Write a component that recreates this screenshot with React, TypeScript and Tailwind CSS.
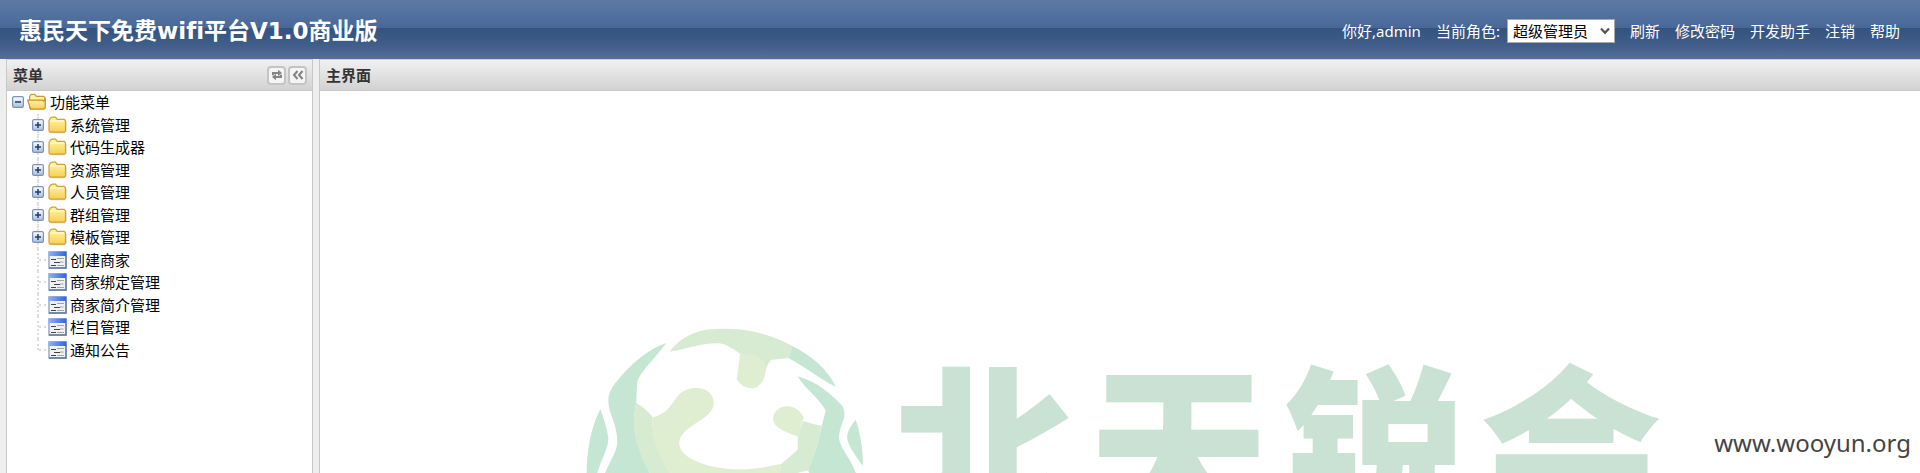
import React from "react";

const folders = ["系统管理", "代码生成器", "资源管理", "人员管理", "群组管理", "模板管理"];
const pages = ["创建商家", "商家绑定管理", "商家简介管理", "栏目管理", "通知公告"];
const links = ["刷新", "修改密码", "开发助手", "注销", "帮助"];

function Gradients() {
  return (
    <svg className="absolute size-0" aria-hidden="true">
      <defs>
        <linearGradient id="folderFill" x1="0" y1="0" x2="0" y2="1">
          <stop offset="0" stopColor="#fff7a8" />
          <stop offset="1" stopColor="#f7cf52" />
        </linearGradient>
        <linearGradient id="toggleFill" x1="0" y1="0" x2="0" y2="1">
          <stop offset="0" stopColor="#ffffff" />
          <stop offset="1" stopColor="#a9bddb" />
        </linearGradient>
        <linearGradient id="pageBar" x1="0" y1="0" x2="1" y2="0">
          <stop offset="0" stopColor="#8db4f5" />
          <stop offset="1" stopColor="#2f62e0" />
        </linearGradient>
      </defs>
    </svg>
  );
}

function FolderIcon() {
  return (
    <svg className="h-[18px] w-[19px] shrink-0" viewBox="0 0 19 18" aria-hidden="true">
      <path d="M2.5 16.8h14.5l1-1V6" fill="none" stroke="#d9d2c0" strokeWidth="1" />
      <path d="M1 4.5 2.5 2l2-.8h3L9.2 3.4h7l1.3 1.4v10l-1.2 1.3H2L1 15z" fill="url(#folderFill)" stroke="#d29e35" strokeWidth="1.2" />
      <path d="M2.3 6.2 3.5 5h12.7" fill="none" stroke="#fffde0" strokeWidth="1" />
    </svg>
  );
}

function OpenFolderIcon() {
  return (
    <svg className="h-[18px] w-[20px] shrink-0" viewBox="0 0 20 18" aria-hidden="true">
      <path d="M2.6 15V3.4l1.6-2h3.6l1.6 2h7.2l1.2 1.2V15z" fill="#fff3a6" stroke="#cf9b38" strokeWidth="1.2" />
      <path d="M.7 7.2h14.7l1 1L18.2 6v8.6l-1.3 1.6H3.6z" fill="url(#folderFill)" stroke="#c58f2e" strokeWidth="1.2" />
    </svg>
  );
}

function PageIcon() {
  return (
    <svg className="h-[18px] w-[19px] shrink-0" viewBox="0 0 19 18" aria-hidden="true">
      <path d="M1 1h17v16H1z" fill="#eef1f5" stroke="#94a4bd" strokeWidth="1.4" />
      <path d="M1 17h17V5" fill="none" stroke="#65799c" strokeWidth="1.4" />
      <path d="M.5.5h18v4.5H.5z" fill="url(#pageBar)" />
      <path d="M9 7.5h7M12 11h3.5M9 14.5h7" stroke="#a3a3a3" strokeWidth="1" />
      <path d="M3 8.5h5M6 11.5h6M3 14.5h5" stroke="#444444" strokeWidth="1.2" />
    </svg>
  );
}

function ToggleIcon({ open }: { open?: boolean }) {
  return (
    <svg className="size-3" viewBox="0 0 12 12" aria-hidden="true">
      <rect x=".6" y=".6" width="10.8" height="10.8" rx="1.5" fill="url(#toggleFill)" stroke="#7c93b8" strokeWidth="1.2" />
      <path d={open ? "M3 6h6" : "M3 6h6M6 3v6"} stroke="#1f3c6b" strokeWidth="1.5" />
    </svg>
  );
}

function Globe() {
  return (
    <svg className="h-[147px] w-[278px] shrink-0" viewBox="50 50 835 441" aria-hidden="true">
      <path fill="#d6ebd1" d="M301 124C325 90 365 66 410 58C500 48 590 62 670 107L658 143L605 149Q597 158 592 172L565 145L512 129Q475 102 455 99C400 96 350 117 301 124Z" />
      <path fill="#c6e6d4" d="M670 107C725 135 775 175 801 230C750 205 710 170 658 143Z" />
      <path fill="#dfedd1" d="M513 129L560 134Q586 146 592 172C588 210 570 234 545 234Q517 232 503 207Z" />
      <path fill="#c6e6d4" d="M291 98C262 140 205 190 203 222L201 278C188 330 190 390 243 491H106C125 445 143 425 144 395C144 340 117 310 117 272C117 245 130 228 145 210C190 155 240 115 291 98Z" />
      <path fill="#c6e6d4" d="M93 296Q112 345 117 385C118 410 97 445 83 491H52C52 420 65 350 93 296Z" />
      <path fill="#d6ebd1" d="M201 278Q228 293 250 321C246 380 270 445 306 491H243C195 405 184 345 201 278Z" />
      <path fill="#dfedd1" d="M250 321C305 308 309 269 334 248C370 222 434 229 434 280C431 330 330 345 330 400C333 450 430 478 512 478C565 477 605 467 636 461L632 491H306C268 443 248 400 250 321Z" />
      <path fill="#dfedd1" d="M612 325C613 282 680 270 704 322L700 333L687 379C650 365 611 350 612 325Z" />
      <path fill="#d6ebd1" d="M702 332Q730 341 758 347C748 392 735 438 717 480L690 487L682 491H632L636 461Q660 443 686 418V379Z" />
      <path fill="#c6e6d4" d="M686 198C745 215 785 250 819 286C840 320 808 345 810 386C815 415 845 445 862 491H722L717 480C742 420 750 382 758 347L770 301C750 262 710 240 686 198Z" />
      <path fill="#c6e6d4" d="M860 328C875 370 882 420 882 467C868 448 834 405 834 378Q836 357 860 328Z" />
    </svg>
  );
}

const panelBar =
  "flex h-8 shrink-0 items-center border-y border-t-[#cfcfcf] border-b-[#c8c8c8] bg-linear-to-b from-[#f1f1f1] to-[#d2d2d2] pr-[5px] pl-[6px] text-[15px] font-bold text-[#333333]";
const toolButton =
  "flex size-[19px] items-center justify-center rounded-[4px] border-2 border-[#c4c4c4] bg-[#f5f5f5] text-[#858585]";

export default function App() {
  return (
    <div className="relative flex h-screen flex-col overflow-hidden bg-[#eeeeee] font-['Noto_Sans','Noto_Sans_CJK_SC',sans-serif] text-[15px] leading-5 text-black">
      <Gradients />
      <header className="flex h-[59px] shrink-0 items-center justify-between bg-[linear-gradient(to_bottom,#5d7aa6_0%,#486898_47%,#35537f_48%,#3f5d89_75%,#546f9b_100%)] pr-5 pl-[19px] text-white">
        <h1 className="pt-[2px] font-['DejaVu_Sans','Noto_Sans_CJK_SC',sans-serif] text-[23px] leading-7 font-bold whitespace-nowrap [font-variant-ligatures:none]">惠民天下免费wifi平台V1.0商业版</h1>
        <nav className="flex items-center gap-[15px] pt-[2px] whitespace-nowrap">
          <span>你好,admin</span>
          <div className="flex items-center gap-[7px]">
            <label htmlFor="role">当前角色:</label>
            <div className="relative flex">
              <select id="role" className="h-6 w-[108px] appearance-none border border-[#a9a9a9] bg-white pl-[5px] text-[15px] leading-5 text-black">
                <option>超级管理员</option>
              </select>
              <svg className="pointer-events-none absolute top-2 right-[5px] h-2 w-[10px]" viewBox="0 0 10 8" aria-hidden="true">
                <path d="m1 1.5 4 4.3 4-4.3" fill="none" stroke="#555555" strokeWidth="2.2" />
              </svg>
            </div>
          </div>
          {links.map((text) => (
            <a key={text} href="#">{text}</a>
          ))}
        </nav>
      </header>

      <div className="flex min-h-0 flex-1 gap-[6px] pl-[6px]">
        <aside className="flex w-[307px] shrink-0 flex-col border-x border-[#c8c8c8] bg-white">
          <div className={panelBar}>
            <h2 className="flex-1">菜单</h2>
            <div className="flex gap-[2px]">
              <button className={toolButton} aria-label="刷新">
                <svg className="size-3 shrink-0" viewBox="0 0 12 12" aria-hidden="true">
                  <path d="M2 6.2V4h5.5M10 5.8V8H4.5" fill="none" stroke="currentColor" strokeWidth="2" />
                  <path d="m7 .8 4 3.2-4 3.2zM5 4.8 1 8l4 3.2z" fill="currentColor" />
                </svg>
              </button>
              <button className={toolButton} aria-label="折叠">
                <svg className="size-3 shrink-0" viewBox="0 0 12 12" aria-hidden="true">
                  <path d="M5.5 2 2 6l3.5 4M10.5 2 7 6l3.5 4" fill="none" stroke="currentColor" strokeWidth="2.1" />
                </svg>
              </button>
            </div>
          </div>
          <ul className="grid h-[270px] auto-rows-fr pl-[5px]">
            <li className="flex items-center">
              <button className="mr-[3px]" aria-label="收起"><ToggleIcon open /></button>
              <OpenFolderIcon />
              <span className="pl-[3px]">功能菜单</span>
            </li>
            {folders.map((name) => (
              <li key={name} className="flex items-stretch pl-5">
                <button className="mr-1 flex flex-col items-center" aria-label="展开">
                  <span className="flex-1 border-l-2 border-dotted border-[#dddddd]" />
                  <ToggleIcon />
                  <span className="flex-1 border-l-2 border-dotted border-[#dddddd]" />
                </button>
                <span className="flex items-center"><FolderIcon /><span className="pl-[3px]">{name}</span></span>
              </li>
            ))}
            {pages.map((name, i) => (
              <li key={name} className="flex items-stretch pl-[25px]">
                <span className={i === pages.length - 1 ? "h-1/2 border-l-2 border-dotted border-[#dddddd]" : "border-l-2 border-dotted border-[#dddddd]"} />
                <span className="mr-[2px] w-[7px] self-center border-t-2 border-dotted border-[#dddddd]" />
                <span className="flex items-center"><PageIcon /><span className="pl-[3px]">{name}</span></span>
              </li>
            ))}
          </ul>
        </aside>

        <main className="flex min-w-0 flex-1 flex-col border-l border-[#c8c8c8] bg-white">
          <div className={panelBar}>
            <h2>主界面</h2>
          </div>
          <div className="flex min-h-0 flex-1 justify-center gap-7 overflow-hidden pl-2">
            <div className="pt-[236px]">
              <Globe />
            </div>
            <div className="flex gap-[14px] pt-[259px] font-['Noto_Sans_CJK_SC',sans-serif] text-[182px] leading-none font-black text-[#c9e2d3]">
              <span>北</span>
              <span>天</span>
              <span>锐</span>
              <span>会</span>
            </div>
          </div>
        </main>
      </div>

      <p className="absolute right-[9px] bottom-[14px] text-2xl leading-8 text-[#444444]">www.wooyun.org</p>
    </div>
  );
}
